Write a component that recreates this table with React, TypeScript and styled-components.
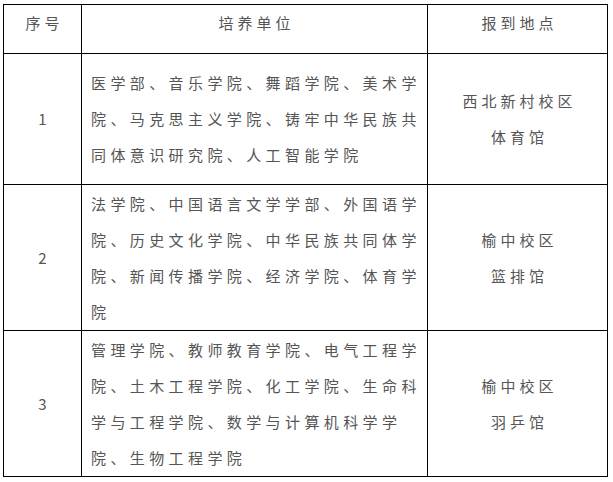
import React from 'react'
import styled, { createGlobalStyle } from 'styled-components'

const GlobalStyle = createGlobalStyle`
  html, body {
    margin: 0;
    padding: 0;
    background: #ffffff;
  }
  body {
    font-family: "Noto Sans CJK SC", "Liberation Sans", sans-serif;
  }
`

const Page = styled.div`
  padding: 4px 0 0 3px;
`

const Table = styled.table`
  border-collapse: collapse;
  table-layout: fixed;
  width: 605px;
  color: #555555;
  font-size: 15px;
  line-height: 36px;
`

const HeadRow = styled.tr`
  height: 49px;
`

const BodyRow = styled.tr<{ $h: number }>`
  height: ${(p) => p.$h}px;
`

const HeadCell = styled.th`
  border: 1px solid #000;
  font-weight: normal;
  text-align: center;
  vertical-align: top;
  padding: 0;
  letter-spacing: 4px;
  text-indent: 4px;
`

const Cell = styled.td<{ $align?: 'left' | 'center' }>`
  border: 1px solid #000;
  padding: ${(p) => (p.$align === 'left' ? '0 0 0 9px' : '0')};
  text-align: ${(p) => p.$align ?? 'center'};
  vertical-align: middle;
  letter-spacing: ${(p) => (p.$align === 'left' ? '4.4px' : '4px')};
  text-indent: ${(p) => (p.$align === 'left' ? '0' : '4px')};
`

const NumCell = styled.td`
  border: 1px solid #000;
  padding: 0;
  text-align: center;
  vertical-align: middle;
`

const Line = styled.span`
  display: block;
  white-space: nowrap;
`

type Row = {
  no: string
  height: number
  units: string[]
  place: string[]
}

const rows: Row[] = [
  {
    no: '1',
    height: 131,
    units: [
      '医学部、音乐学院、舞蹈学院、美术学',
      '院、马克思主义学院、铸牢中华民族共',
      '同体意识研究院、人工智能学院',
    ],
    place: ['西北新村校区', '体育馆'],
  },
  {
    no: '2',
    height: 146,
    units: [
      '法学院、中国语言文学学部、外国语学',
      '院、历史文化学院、中华民族共同体学',
      '院、新闻传播学院、经济学院、体育学',
      '院',
    ],
    place: ['榆中校区', '篮排馆'],
  },
  {
    no: '3',
    height: 146,
    units: [
      '管理学院、教师教育学院、电气工程学',
      '院、土木工程学院、化工学院、生命科',
      '学与工程学院、数学与计算机科学学',
      '院、生物工程学院',
    ],
    place: ['榆中校区', '羽乒馆'],
  },
]

export default function App() {
  return (
    <Page>
      <GlobalStyle />
      <Table>
        <colgroup>
          <col style={{ width: 78 }} />
          <col style={{ width: 346 }} />
          <col style={{ width: 180 }} />
        </colgroup>
        <thead>
          <HeadRow>
            <HeadCell>序号</HeadCell>
            <HeadCell>培养单位</HeadCell>
            <HeadCell>报到地点</HeadCell>
          </HeadRow>
        </thead>
        <tbody>
          {rows.map((r) => (
            <BodyRow key={r.no} $h={r.height}>
              <NumCell>{r.no}</NumCell>
              <Cell $align="left">
                {r.units.map((u, i) => (
                  <Line key={i}>{u}</Line>
                ))}
              </Cell>
              <Cell>
                {r.place.map((p, i) => (
                  <Line key={i}>{p}</Line>
                ))}
              </Cell>
            </BodyRow>
          ))}
        </tbody>
      </Table>
    </Page>
  )
}
